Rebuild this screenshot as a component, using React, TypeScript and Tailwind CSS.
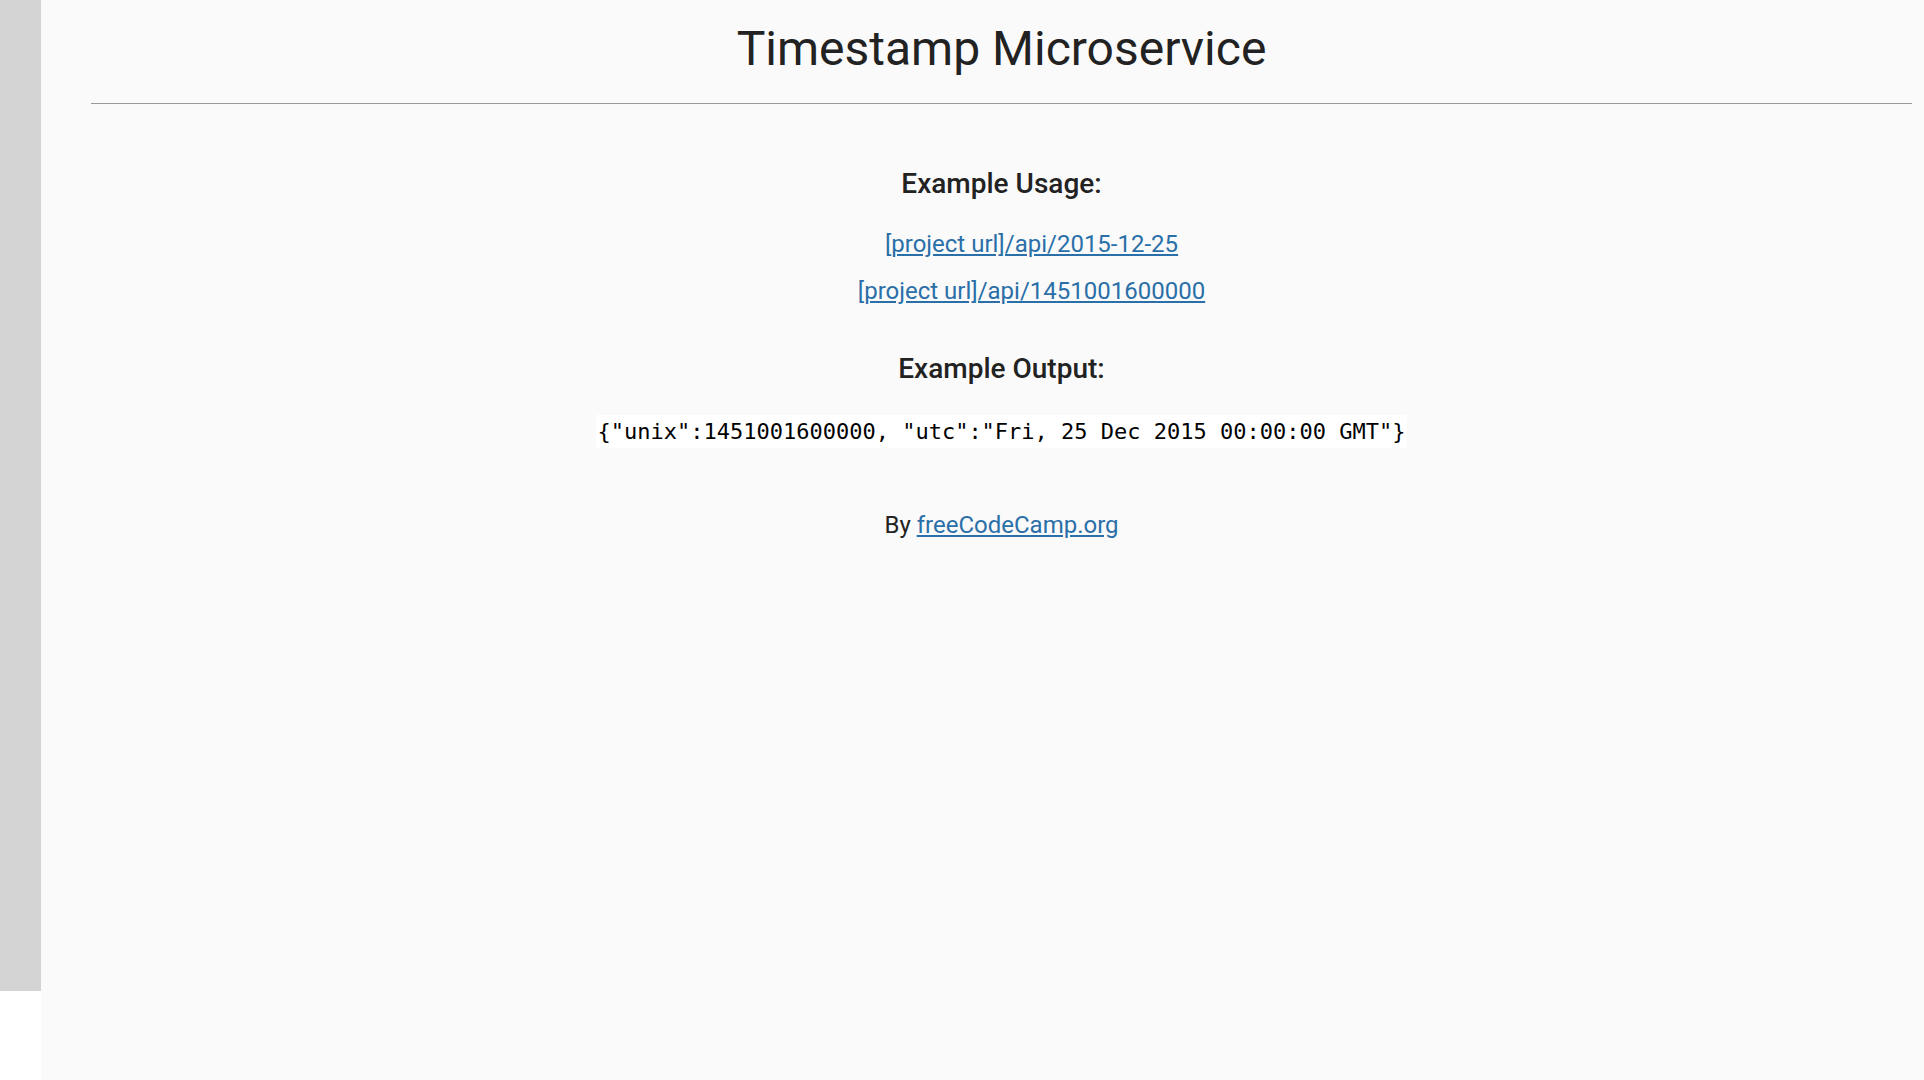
export default function App() {
  return (
    <div className="flex min-h-screen w-full bg-white" style={{ fontFamily: "Roboto, 'Liberation Sans', sans-serif" }}>
      {/* left strip */}
      <div className="w-[41px] h-[991px] shrink-0 bg-[#d4d4d4]" />

      <main className="flex-1 min-h-screen bg-[#fafafa] pl-[50px] pr-[12px] text-[#222]">
        <h1 className="mt-[21px] text-center text-[48px] leading-[56px] font-normal">Timestamp Microservice</h1>
        <hr className="mt-[26px] border-0 border-t border-[#9a9a9a]" />

        <div className="flex flex-col items-center">
          <h3 className="mt-[63px] text-[28px] leading-[33px] font-medium">Example Usage:</h3>
          <ul className="mt-[30px] pl-[60px] flex flex-col items-center gap-[19px] text-[24px] leading-[28px]">
            <li>
              <a href="#" className="text-[#2a6fa8] underline">[project url]/api/2015-12-25</a>
            </li>
            <li>
              <a href="#" className="text-[#2a6fa8] underline">[project url]/api/1451001600000</a>
            </li>
          </ul>

          <h3 className="mt-[47px] text-[28px] leading-[33px] font-medium">Example Output:</h3>
          <code
            className="mt-[30px] bg-white px-[2px] h-[33px] flex items-center text-[22px] text-black"
            style={{ fontFamily: "'DejaVu Sans Mono', 'Liberation Mono', monospace" }}
          >
            {'{"unix":1451001600000, "utc":"Fri, 25 Dec 2015 00:00:00 GMT"}'}
          </code>

          <p className="mt-[63px] text-[24px] leading-[28px]">
            By <a href="#" className="text-[#2a6fa8] underline">freeCodeCamp.org</a>
          </p>
        </div>
      </main>
    </div>
  );
}
